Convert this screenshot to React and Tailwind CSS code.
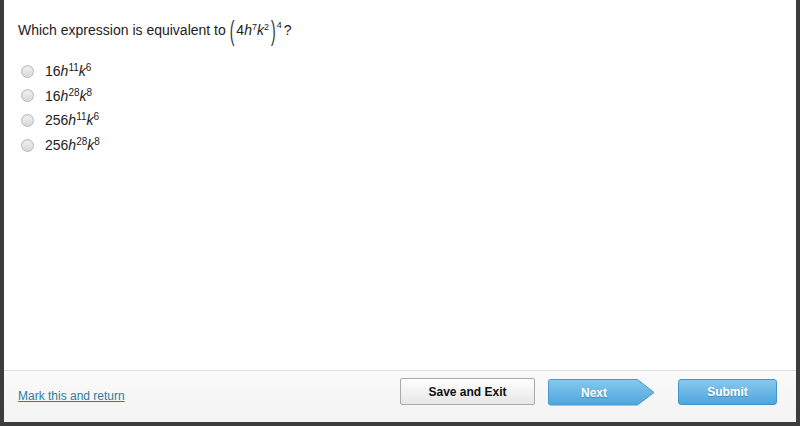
import React from "react";

const F = { fontFamily: '"Liberation Sans", Arial, sans-serif' };

function Radio() {
  return (
    <span className="inline-block w-[13px] h-[13px] rounded-full border border-[#b9b9b9] bg-gradient-to-b from-[#f4f4f4] to-[#d6d6d6] shadow-[inset_0_1px_1px_rgba(0,0,0,0.08)]" />
  );
}

function Option({ coef, he, ke }) {
  return (
    <div className="flex items-center h-[24.6px]">
      <div className="w-[41px] flex justify-start pl-[17px]">
        <Radio />
      </div>
      <span className="text-[14px] text-[#222] leading-none">
        {coef}
        <i>h</i>
        <sup className="text-[10px] relative -top-[5px]">{he}</sup>
        <i>k</i>
        <sup className="text-[10px] relative -top-[5px]">{ke}</sup>
      </span>
    </div>
  );
}

export default function App() {
  return (
    <div style={F} className="w-[800px] h-[426px] bg-[#3c3c3c] pl-1 pr-1 pb-1">
      <div className="h-full bg-white flex flex-col">
        <div className="flex-1 pt-[14px]">
          <div className="flex items-center pl-[14px] h-[32px] text-[14px] text-[#222]">
            <span>Which expression is equivalent to&nbsp;</span>
            <span className="flex items-center">
              <span className="inline-block scale-y-[2] font-light text-[14px] mr-[2px] text-[#333]">(</span>
              <span className="text-[14px]">
                4<i>h</i>
                <sup className="text-[9px] relative -top-[5px]">7</sup>
                <i>k</i>
                <sup className="text-[9px] relative -top-[5px]">2</sup>
              </span>
              <span className="inline-block scale-y-[2] font-light text-[14px] ml-[2px] text-[#333]">)</span>
              <span className="text-[9px] self-start -mt-[1px] ml-[1px]">4</span>
            </span>
            <span className="ml-[2px]">?</span>
          </div>
          <div className="mt-[13px] flex flex-col">
            <Option coef="16" he="11" ke="6" />
            <Option coef="16" he="28" ke="8" />
            <Option coef="256" he="11" ke="6" />
            <Option coef="256" he="28" ke="8" />
          </div>
        </div>
        <div className="h-[52px] border-t border-[#dedede] bg-gradient-to-b from-[#fafafa] to-[#f3f3f3] flex items-start pt-[7px] pl-[14px] pr-[19px]">
          <a href="#" className="mt-[9px] text-[12px] text-[#2e7c9e] underline">
            Mark this and return
          </a>
          <div className="ml-auto flex items-start">
            <button className="w-[135px] h-[27px] rounded-[2px] border border-[#a9a9a9] bg-gradient-to-b from-[#ffffff] to-[#e6e6e6] text-[12px] font-bold text-[#111]">
              Save and Exit
            </button>
            <div className="relative ml-[13px] w-[107px] h-[27px] mt-[1px]">
              <svg className="absolute inset-0" width="107" height="27" viewBox="0 0 107 27">
                <defs>
                  <linearGradient id="gn" x1="0" y1="0" x2="0" y2="1">
                    <stop offset="0" stopColor="#86c9ef" />
                    <stop offset="1" stopColor="#4ea5dc" />
                  </linearGradient>
                </defs>
                <path d="M2.5 0.5 H89.5 L106 13.5 L89.5 26 H2.5 Q0.5 26 0.5 24 V2.5 Q0.5 0.5 2.5 0.5 Z" fill="url(#gn)" stroke="#4b97cc" strokeWidth="1" />
              </svg>
              <span className="relative flex items-center justify-center w-[92px] h-full text-[12px] font-bold text-white [text-shadow:0_1px_1px_rgba(0,0,0,0.25)]">
                Next
              </span>
            </div>
            <button className="ml-[23px] mt-[1px] w-[99px] h-[26px] rounded-[3px] border border-[#4494c9] bg-gradient-to-b from-[#86c9ef] to-[#4ea5dc] text-[12px] font-bold text-white [text-shadow:0_1px_1px_rgba(0,0,0,0.25)]">
              Submit
            </button>
          </div>
        </div>
      </div>
    </div>
  );
}
